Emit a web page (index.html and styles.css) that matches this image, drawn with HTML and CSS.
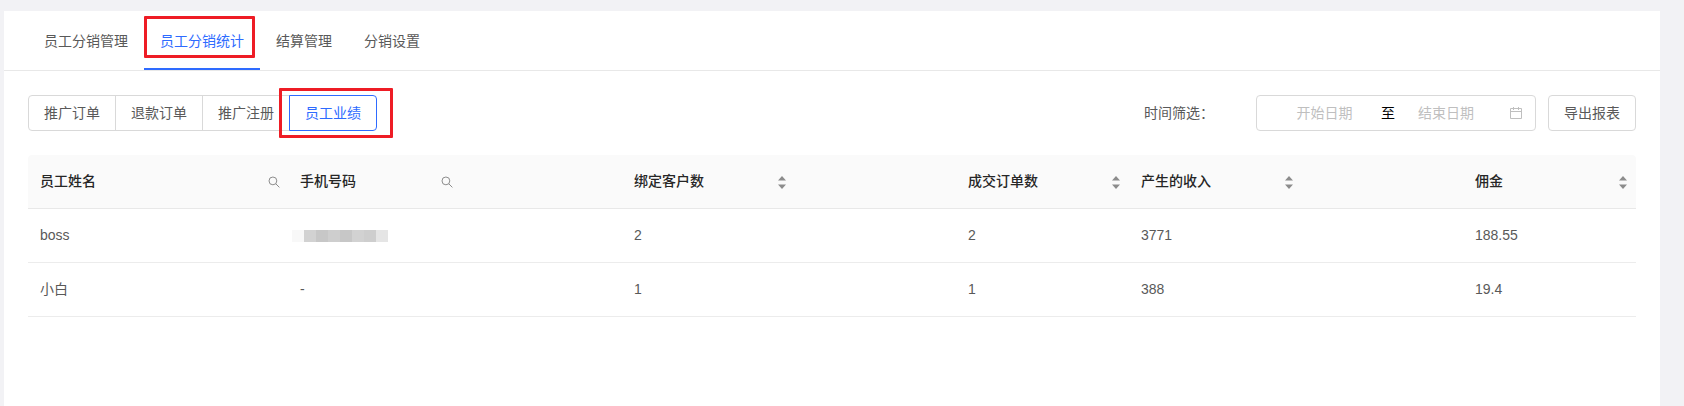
FILE: index.html
```html
<!DOCTYPE html>
<html lang="zh-CN">
<head>
<meta charset="utf-8">
<meta name="viewport" content="width=device-width, initial-scale=1">
<title>员工分销统计</title>
<link rel="stylesheet" href="styles.css">
</head>
<body>
<svg class="defs" aria-hidden="true">
  <symbol id="icon-search" viewBox="0 0 12 12"><circle cx="4.9" cy="4.9" r="3.9"/><path d="M7.7 7.7 11.4 11.4"/></symbol>
  <symbol id="icon-sort" viewBox="0 0 8 13"><path d="M4 0 8 4.6H0zM0 8.4h8L4 13z"/></symbol>
</svg>
<main class="panel">
  <nav class="tabs">
    <a class="tab" href="#manage">员工分销管理</a>
    <a class="tab tab-active" href="#stats" aria-current="page">员工分销统计<span class="mark mark-tab"></span></a>
    <a class="tab" href="#settle">结算管理</a>
    <a class="tab" href="#settings">分销设置</a>
  </nav>
  <section class="content">
    <div class="toolbar">
      <div class="segments" role="radiogroup" aria-label="报表类型">
        <label class="segment"><input type="radio" name="report">推广订单</label>
        <label class="segment"><input type="radio" name="report">退款订单</label>
        <label class="segment"><input type="radio" name="report">推广注册</label>
        <label class="segment segment-active"><input type="radio" name="report" checked>员工业绩<span class="mark mark-segment"></span></label>
      </div>
      <div class="filters">
        <label class="filter-label" for="start">时间筛选：</label>
        <div class="range">
          <input id="start" class="date date-start" type="text" placeholder="开始日期">
          <span class="range-sep">至</span>
          <input class="date" type="text" placeholder="结束日期" aria-label="结束日期">
          <svg class="calendar" viewBox="0 0 14 14" aria-hidden="true"><path d="M1.5 2.5h11v10h-11zM1.5 5.5h11M4.5 1v3M9.5 1v3"/></svg>
        </div>
        <button class="export" type="button">导出报表</button>
      </div>
    </div>
    <table class="table">
      <colgroup>
        <col class="col-name"><col class="col-wide"><col class="col-wide"><col class="col-narrow"><col class="col-wide"><col class="col-narrow">
      </colgroup>
      <thead>
        <tr>
          <th scope="col"><div class="head">员工姓名<button class="tool" type="button" aria-label="搜索员工姓名"><svg class="search"><use href="#icon-search"/></svg></button></div></th>
          <th scope="col"><div class="head head-short">手机号码<button class="tool" type="button" aria-label="搜索手机号码"><svg class="search"><use href="#icon-search"/></svg></button></div></th>
          <th scope="col"><div class="head head-short">绑定客户数<button class="tool" type="button" aria-label="按绑定客户数排序"><svg class="sort"><use href="#icon-sort"/></svg></button></div></th>
          <th scope="col"><div class="head head-short">成交订单数<button class="tool" type="button" aria-label="按成交订单数排序"><svg class="sort"><use href="#icon-sort"/></svg></button></div></th>
          <th scope="col"><div class="head head-short">产生的收入<button class="tool" type="button" aria-label="按产生的收入排序"><svg class="sort"><use href="#icon-sort"/></svg></button></div></th>
          <th scope="col"><div class="head head-short">佣金<button class="tool" type="button" aria-label="按佣金排序"><svg class="sort"><use href="#icon-sort"/></svg></button></div></th>
        </tr>
      </thead>
      <tbody>
        <tr>
          <td>boss</td>
          <td><div class="mosaic"><i class="m1"></i><i class="m2"></i><i class="m3"></i><i class="m4"></i><i class="m3"></i><i class="m2"></i><i class="m4"></i><i class="m5"></i></div></td>
          <td>2</td><td>2</td><td>3771</td><td>188.55</td>
        </tr>
        <tr>
          <td>小白</td><td>-</td><td>1</td><td>1</td><td>388</td><td>19.4</td>
        </tr>
      </tbody>
    </table>
  </section>
</main>
</body>
</html>
```

FILE: styles.css
```css
* {
  box-sizing: border-box;
}

body {
  margin: 0;
  min-height: 100vh;
  display: flex;
  padding: 11px 24px 0 4px;
  background: #f2f2f5;
  color: #595959;
  font: 14px/20px "Liberation Sans", "Noto Sans CJK SC", sans-serif;
}

button,
input {
  font: inherit;
  color: inherit;
}

.defs {
  position: absolute;
  width: 0;
  height: 0;
}

.panel {
  flex: 1;
  min-width: 0;
  background: #fff;
}

.tabs {
  display: flex;
  padding: 0 24px;
  border-bottom: 1px solid #e8e8e8;
}

.tab {
  position: relative;
  padding: 20px 16px 17px;
  border-bottom: 2px solid transparent;
  color: inherit;
  text-decoration: none;
}

.tab-active {
  color: #2e6bff;
  border-bottom-color: #2e6bff;
}

/* Red call-out frames over the highlighted controls */
.mark {
  position: absolute;
  border: 3px solid #ee1c25;
  border-radius: 1px;
  pointer-events: none;
}

.mark-tab {
  left: 0;
  top: 5px;
  width: 111px;
  height: 42px;
}

.mark-segment {
  left: -11px;
  top: -8px;
  width: 114px;
  height: 50px;
}

.content {
  padding: 24px;
}

.toolbar {
  display: flex;
  justify-content: space-between;
  margin-bottom: 24px;
}

.segments {
  display: flex;
}

.segment {
  position: relative;
  height: 36px;
  padding: 7px 15px;
  border: 1px solid #d9d9d9;
  cursor: pointer;
}

.segment + .segment {
  margin-left: -1px;
}

.segment:first-child {
  border-radius: 4px 0 0 4px;
}

.segment:last-child {
  border-radius: 0 4px 4px 0;
}

.segment-active {
  border-color: #2e6bff;
  color: #2e6bff;
}

.segment input {
  position: absolute;
  opacity: 0;
  margin: 0;
}

.filters {
  display: flex;
  align-items: center;
  gap: 12px;
}

.filter-label {
  width: 100px;
}

.range {
  display: flex;
  align-items: center;
  width: 280px;
  height: 36px;
  padding: 0 12px 0 11px;
  border: 1px solid #d9d9d9;
  border-radius: 4px;
}

.date {
  flex: 1;
  min-width: 0;
  padding: 0;
  border: 0;
  background: none;
  text-align: center;
  outline: 0;
}

.date-start {
  flex: 0 0 113px;
}

.date::placeholder {
  color: #bfbfbf;
}

.range-sep {
  color: #000;
}

.calendar {
  width: 14px;
  height: 14px;
  margin-left: 12px;
  fill: none;
  stroke: #bfbfbf;
}

.export {
  height: 36px;
  padding: 0 15px;
  border: 1px solid #d9d9d9;
  border-radius: 4px;
  background: #fff;
}

.table {
  width: 100%;
  table-layout: fixed;
  border-collapse: separate;
  border-spacing: 0;
}

.col-name {
  width: 260px;
}

.col-wide {
  width: 334px;
}

.col-narrow {
  width: 173px;
}

.table th,
.table td {
  height: 54px;
  padding: 16px 12px 17px;
  border-bottom: 1px solid #ececec;
  text-align: left;
}

.table th {
  background: #fafafa;
  border-bottom-color: #e8e8e8;
  color: #262626;
  font-weight: 500;
}

.table th:first-child {
  border-top-left-radius: 4px;
}

.table th:last-child {
  border-top-right-radius: 4px;
}

.head {
  display: flex;
  align-items: center;
  justify-content: space-between;
}

.head-short {
  max-width: 149px;
}

.tool {
  display: flex;
  padding: 2px 0 0;
  border: 0;
  background: none;
}

.search {
  width: 12px;
  height: 12px;
  margin-right: -4px;
  fill: none;
  stroke: #8c8c8c;
}

.sort {
  width: 8px;
  height: 13px;
  margin-right: -3px;
  fill: #8c8c8c;
}

.mosaic {
  display: flex;
  margin-left: -8px;
  padding-top: 2px;
}

.mosaic i {
  width: 12px;
  height: 12px;
}

.m1 { background: #f8f8f8; }
.m2 { background: #d2d2d2; }
.m3 { background: #c7c7c7; }
.m4 { background: #cecece; }
.m5 { background: #e5e5e5; }
```
